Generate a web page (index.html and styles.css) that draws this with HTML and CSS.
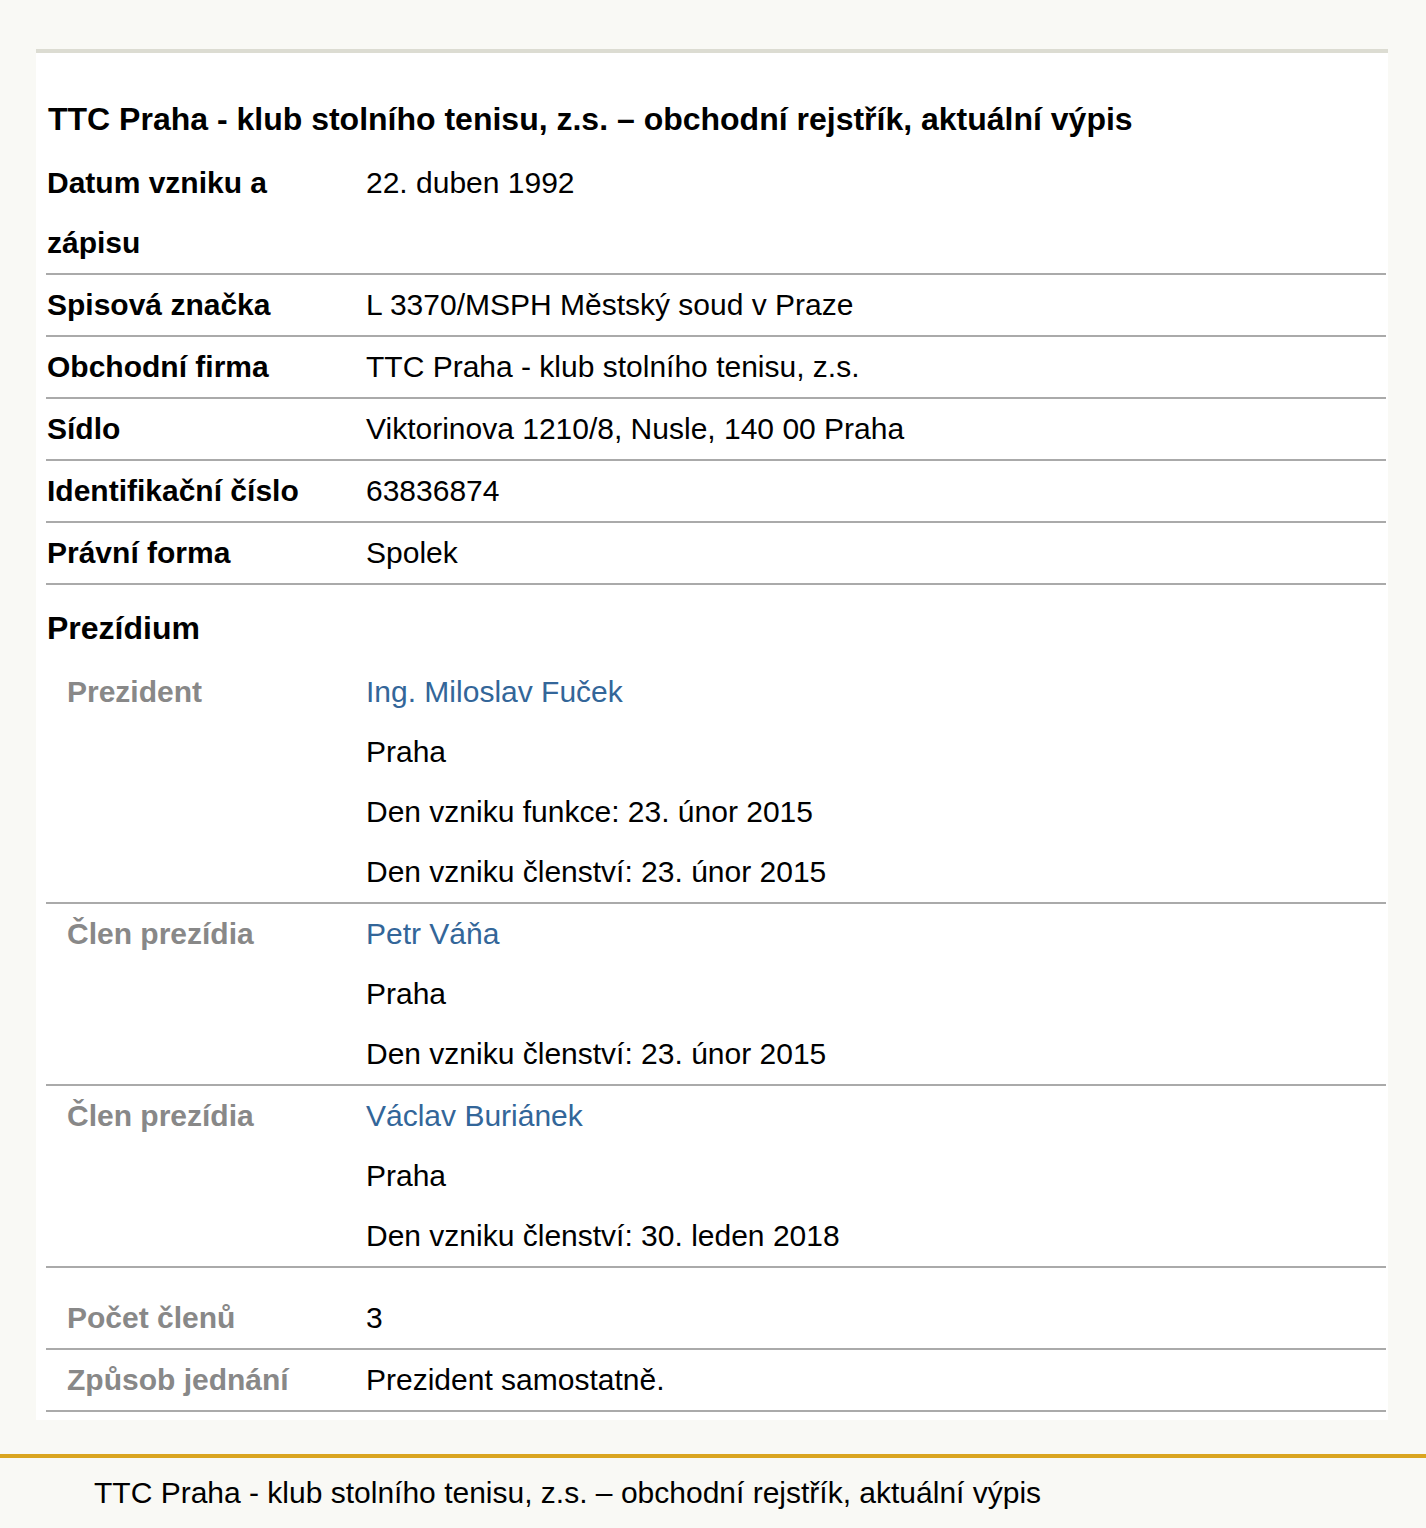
FILE: index.html
```html
<!DOCTYPE html>
<html lang="cs">
<head>
<meta charset="utf-8">
<title>TTC Praha - klub stolního tenisu, z.s. – obchodní rejstřík, aktuální výpis</title>
<link rel="stylesheet" href="styles.css">
</head>
<body>
<main class="page">
  <section class="card">
    <h1 class="title">TTC Praha - klub stolního tenisu, z.s. – obchodní rejstřík, aktuální výpis</h1>
    <div class="row">
      <div class="label">Datum vzniku a zápisu</div>
      <div class="value">22. duben 1992</div>
    </div>
    <div class="row">
      <div class="label">Spisová značka</div>
      <div class="value">L 3370/MSPH Městský soud v Praze</div>
    </div>
    <div class="row">
      <div class="label">Obchodní firma</div>
      <div class="value">TTC Praha - klub stolního tenisu, z.s.</div>
    </div>
    <div class="row">
      <div class="label">Sídlo</div>
      <div class="value">Viktorinova 1210/8, Nusle, 140 00 Praha</div>
    </div>
    <div class="row">
      <div class="label">Identifikační číslo</div>
      <div class="value">63836874</div>
    </div>
    <div class="row">
      <div class="label">Právní forma</div>
      <div class="value">Spolek</div>
    </div>
    <h2 class="section">Prezídium</h2>
    <div class="row sub">
      <div class="label">Prezident</div>
      <div class="value">
        <a class="person" href="#">Ing. Miloslav Fuček</a>
        <div>Praha</div>
        <div>Den vzniku funkce: 23. únor 2015</div>
        <div>Den vzniku členství: 23. únor 2015</div>
      </div>
    </div>
    <div class="row sub">
      <div class="label">Člen prezídia</div>
      <div class="value">
        <a class="person" href="#">Petr Váňa</a>
        <div>Praha</div>
        <div>Den vzniku členství: 23. únor 2015</div>
      </div>
    </div>
    <div class="row sub">
      <div class="label">Člen prezídia</div>
      <div class="value">
        <a class="person" href="#">Václav Buriánek</a>
        <div>Praha</div>
        <div>Den vzniku členství: 30. leden 2018</div>
      </div>
    </div>
    <div class="row sub spaced">
      <div class="label">Počet členů</div>
      <div class="value">3</div>
    </div>
    <div class="row sub">
      <div class="label">Způsob jednání</div>
      <div class="value">Prezident samostatně.</div>
    </div>
  </section>
</main>
<footer class="footer">TTC Praha - klub stolního tenisu, z.s. – obchodní rejstřík, aktuální výpis</footer>
</body>
</html>
```

FILE: styles.css
```css
html, body {
  margin: 0;
  padding: 0;
}
body {
  background: #f9f9f5;
  font-family: "Liberation Sans", Arial, sans-serif;
  font-size: 30px;
  color: #000;
}
.page {
  padding: 49px 38px 0 36px;
}
.card {
  background: #fff;
  border-top: 4px solid #dcdcd2;
  padding: 0 2px 8px 10px;
}
.title {
  margin: 0;
  padding: 50px 0 18px 2px;
  font-size: 32px;
  line-height: 32px;
  font-weight: bold;
}
.row {
  display: grid;
  grid-template-columns: 320px 1fr;
  line-height: 60px;
  border-bottom: 2px solid #aaa;
}
.label {
  font-weight: bold;
  padding-left: 1px;
}
.section {
  margin: 13px 0 4px 1px;
  font-size: 32px;
  line-height: 60px;
  font-weight: bold;
}
.sub .label {
  padding-left: 21px;
  color: #888;
}
.spaced {
  padding-top: 20px;
}
.person {
  display: block;
  color: #336699;
  text-decoration: none;
}
.footer {
  margin-top: 34px;
  border-top: 4px solid #daa520;
  padding: 5px 0 4px 94px;
  line-height: 60px;
  font-size: 30px;
}
```
